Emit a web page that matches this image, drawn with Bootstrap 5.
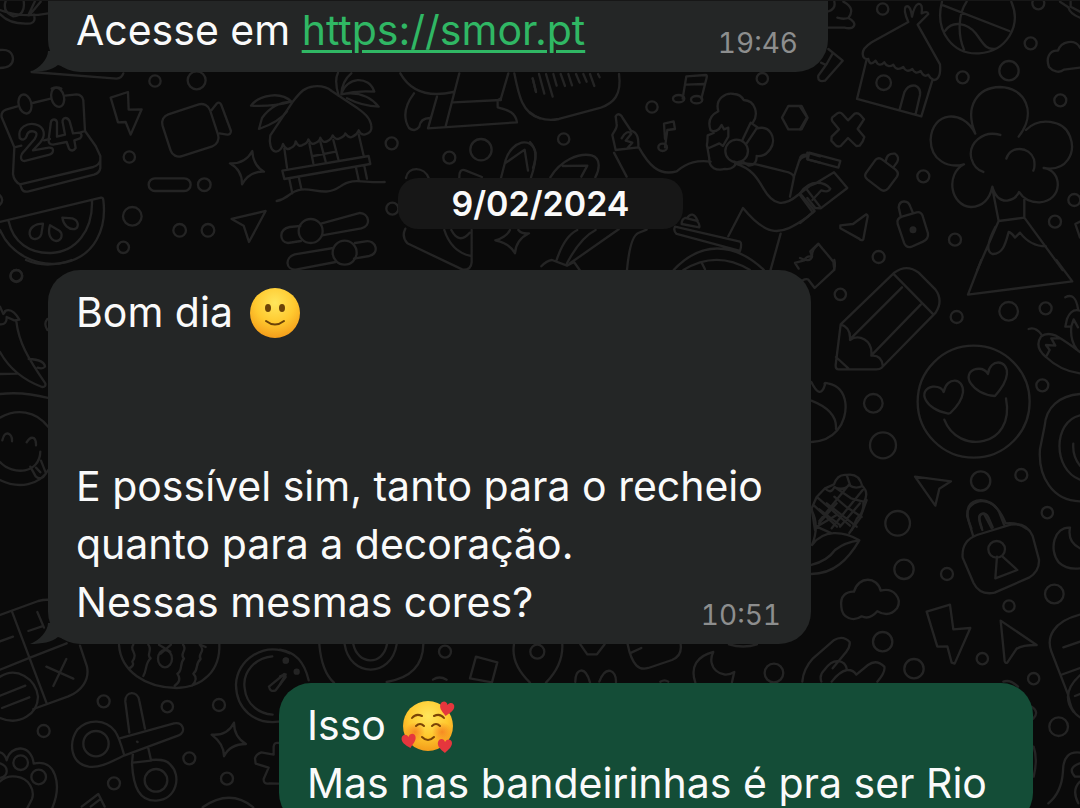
<!DOCTYPE html>
<html lang="pt">
<head>
<meta charset="utf-8">
<meta name="viewport" content="width=device-width, initial-scale=1">
<title>Conversa</title>
<link href="https://cdn.jsdelivr.net/npm/bootstrap@5.3.0/dist/css/bootstrap.min.css" rel="stylesheet">
<style>
  body { background: #0a0a0a; font-family: "Inter", "Liberation Sans", sans-serif; color: #fafafa; }
  .chat { height: 100vh; padding: 0 47px 0 48px; border-top: 1px solid #171717; }
  .wallpaper { z-index: 0; fill: none; stroke: #242424; stroke-width: 7; stroke-linecap: round; stroke-linejoin: round; }
  .wallpaper .solid { fill: #242424; }
  .thread { z-index: 1; }
  .bubble { background: #242626; border-radius: 32px; padding: 13px 28px; font-size: 41px; line-height: 58px; max-width: 100%; }
  .bubble-cut { width: 780px; padding-top: 0; border-top-left-radius: 0; border-top-right-radius: 0; }
  .bubble-in { width: 763px; }
  .bubble-out { width: 754px; margin-top: 39px; background: #144d37; }
  .bubble a { color: #30b764; text-decoration-thickness: 3px; text-underline-offset: 5px; }
  .stamp { position: absolute; right: 30px; bottom: 12px; font-size: 28px; line-height: 34px; color: #8d8e8e; font-variant-numeric: tabular-nums; }
  .tail { position: absolute; left: -18px; bottom: -1px; fill: #242626; }
  .day { background: #171717; border-radius: 20px; font-size: 34px; line-height: 51px; font-weight: 600; padding: 0 53px; margin: 106px 0 41px; }
  .emoji { width: 56px; height: 56px; margin-left: 3px; vertical-align: -14px; }
</style>
</head>
<body>
<main class="chat position-relative overflow-hidden">
  <svg class="wallpaper position-absolute top-0 start-0 w-100 h-100" viewBox="0 1 1080 807" preserveAspectRatio="xMinYMin slice" aria-hidden="true">
    <!-- calendar, bolt, camera, melon -->
    <g transform="translate(0 70) scale(.3333)">
      <path d="M95 6L350 26Q365 24 370 10"/>
      <circle cx="465" cy="33" r="17"/><circle cx="590" cy="31" r="27"/>
      <path d="M52 109L18 119Q2 125 5 142L43 232L39 312Q42 334 60 343L66 358Q71 367 86 364L282 314Q299 309 301 294V258L287 228L255 183L250 91Q247 74 230 73L196 77M98 99L152 86M60 343L280 291Q297 286 301 271M43 232L64 227M132 211L150 207M242 187L255 183"/>
      <ellipse cx="75" cy="102" rx="19" ry="29" transform="rotate(-14 75 102)"/><ellipse cx="173" cy="82" rx="19" ry="29" transform="rotate(-14 173 82)"/>
      <path d="M59 204C52 171 83 158 106 163C137 171 137 199 120 218L99 241L146 233Q160 232 159 242Q158 252 146 255L75 273Q62 274 63 260Q64 252 71 245L104 207Q117 188 100 184Q83 182 80 198Q73 216 59 204Z"/>
      <path d="M171 156Q168 147 159 149Q152 151 152 162L146 208Q144 224 159 224L200 216L207 236Q217 248 227 234L223 211L240 205Q250 195 239 188L219 190L209 154Q203 141 192 145Q185 150 189 162L195 194L171 200Z"/>
      <path d="M332 83L384 66L386 119L425 118L392 194L377 156L354 157Z"/>
      <rect x="496" y="115" width="150" height="132" rx="27" transform="rotate(-18 571 181)"/>
      <path d="M635 120L651 100Q659 94 664 105L693 183Q692 195 682 194L658 190"/>
      <circle cx="388" cy="261" r="17"/>
      <path d="M757 243Q759 286 792 305Q749 303 726 343Q727 301 690 280Q736 282 757 243Z"/>
      <rect x="446" y="325" width="126" height="38" rx="19"/><circle cx="613" cy="344" r="19"/>
      <path d="M0 456L303 383Q309 382 310 390C321 477 284 557 197 577C109 597 30 549 0 480M26 454C39 517 89 551 153 549C227 546 279 483 276 391"/>
      <path d="M129 461C103 461 87 475 89 493C94 515 119 509 124 492ZM150 466C143 488 149 511 169 513C187 511 189 491 178 482ZM187 443C190 464 205 480 225 477C239 470 235 450 217 445Z"/>
      <circle cx="397" cy="439" r="28"/><circle cx="370" cy="532" r="17"/><circle cx="539" cy="481" r="19"/><circle cx="624" cy="481" r="19"/>
      <path d="M797 423L695 447L731 467L747 516Z"/><circle cx="49" cy="618" r="18"/><path d="M0 376Q13 390 0 404"/>
    </g>
    <!-- beach hut, walking legs, sliders -->
    <g transform="translate(250 70) scale(.3333)">
      <path d="M129 94L61 196C57 217 61 243 78 245Q93 244 99 222Q109 244 122 234Q136 228 137 214Q145 233 158 225Q172 221 175 208Q184 227 196 219Q210 214 211 203Q218 220 231 214Q245 208 248 196Q258 212 269 205Q284 200 286 190Q298 207 308 200Q321 194 326 181Q333 197 346 193Q367 188 364 168C361 142 340 127 323 115L245 63Q225 46 192 49C162 52 151 67 129 94Z"/>
      <path d="M124 95C94 64 28 73 3 107Q64 111 124 95Q70 97 36 144L27 177Q90 154 111 124M266 77C257 48 256 24 264 8M274 73Q276 33 304 10M274 73C289 20 356 15 373 65Q320 61 274 73Q344 60 386 110Q338 109 291 85"/>
      <path d="M103 235L111 293M326 193L341 257M178 220L190 280M211 215L227 275M250 210L265 268M190 258L257 245M97 302L356 258L361 282L103 327ZM118 327L127 370M147 325L154 356M318 293L326 330M343 288L351 326M80 393C119 386 114 365 153 359C187 352 226 381 270 350C311 319 341 341 404 336"/>
      <circle cx="425" cy="220" r="18"/><circle cx="427" cy="416" r="18"/><circle cx="598" cy="263" r="18"/><circle cx="693" cy="239" r="32"/>
      <path d="M451 10C482 65 533 83 610 66M628 10L587 169M775 10L753 85L743 91V112C778 121 796 128 801 157L534 175L561 80M610 97L753 90M492 70Q449 127 477 174Q494 188 508 170Q511 145 540 144M793 10C806 76 817 130 870 145M848 25L858 65"/>
      <path d="M468 324C474 288 523 289 536 324M628 324Q627 294 646 301L696 321M753 324L767 270C785 213 846 196 857 249Q857 282 843 323M765 280L824 239L834 302"/>
      <path d="M151 468L119 471C87 477 86 515 114 519L153 513M213 461L330 429C356 430 366 467 334 475L216 496M250 534L134 553C104 563 106 599 137 599L257 576M315 519L347 514C379 509 390 551 358 558L312 566"/>
      <circle cx="182" cy="483" r="36"/><circle cx="284" cy="548" r="36"/>
      <path d="M466 476Q454 500 472 520L638 599Q663 601 665 577V480M583 480Q604 545 662 558M604 480Q628 525 659 488M780 480Q769 502 736 511Q779 520 795 550Q798 509 837 490Q814 492 805 480"/>
    </g>
    <!-- dancer with headphones, notes -->
    <g transform="translate(530 60) scale(.3333)">
      <path d="M8 55L18 96M27 42L43 101M48 42L68 110M70 42L80 77M92 42L105 78M115 42L126 76M138 42L149 68M160 42L170 65M180 42L193 78M204 42L209 52M267 42C276 106 250 130 210 144L87 177Q35 187 0 157"/>
      <circle cx="366" cy="141" r="17"/><circle cx="101" cy="237" r="17"/><circle cx="697" cy="56" r="17"/>
      <path d="M458 116L469 49L527 45Q532 45 530 53L514 116M469 74L522 72M405 262L412 210L435 207L431 184L402 191L405 237"/>
      <ellipse cx="446" cy="116" rx="17" ry="11"/><ellipse cx="500" cy="119" rx="17" ry="11"/><ellipse cx="398" cy="262" rx="13" ry="11"/>
      <path d="M257 270L247 225C251 214 263 205 260 192L257 169C265 156 275 167 278 174L303 212C323 218 326 234 325 262ZM275 235Q291 207 304 221L287 242L307 248L292 265M252 278L290 350M327 263C354 311 385 350 440 334C473 307 503 300 542 305"/>
      <path d="M542 211C530 178 547 163 565 154C554 115 588 97 612 102Q632 103 641 120C677 122 686 163 669 187M542 211Q553 218 567 207L575 195L582 208L595 203L595 230L579 258L568 250L537 264Q528 263 532 247L533 226L551 219M532 261L538 296C536 325 560 333 585 327C607 330 621 315 614 305M637 241L662 188L682 202L650 250M679 206C720 193 742 236 721 267Q704 292 680 288M680 288Q681 315 657 317L640 306"/><circle cx="620" cy="273" r="34"/>
      <path d="M616 311C665 325 682 354 700 385C730 437 761 441 804 405L839 378L870 365M625 309L679 313L764 334Q789 338 792 352L780 410M791 353L810 295Q813 283 829 284M832 278L870 289M832 278V298L870 308M810 405L848 457L827 475C753 526 714 535 639 444L595 529M752 521L722 629M830 388L870 440"/>
      <path d="M775 138L815 138L833 173L815 208L775 208L756 173Z"/>
      <path d="M0 246Q27 275 9 324M61 352C93 300 147 278 185 286C217 296 206 333 196 352M98 318L172 317L154 350"/>
      <path d="M80 600Q103 529 142 510M111 610Q151 533 197 510M120 610L266 508M34 619Q50 602 66 600L111 617L132 606L149 630M291 630Q300 530 325 519L350 509M435 500L630 545Q637 550 630 573L440 522Q429 513 435 500ZM455 492L508 502Q510 492 501 483L465 474Q455 478 455 492M471 474Q488 450 503 482M431 630C512 544 610 544 702 630M460 630Q560 569 660 630M515 608L525 628M866 553Q845 567 846 590Q830 586 823 601L795 609L806 626"/>
    </g>
    <!-- straw house, ball, tree, locks -->
    <g transform="translate(800 0) scale(.3333)">
      <path d="M103 5Q108 28 85 34M130 5C157 18 159 37 145 54C177 70 162 90 134 83H85M112 53Q130 59 145 54M85 147L128 182L75 242Q52 248 55 227L80 192L98 160M63 188L78 195"/>
      <circle cx="248" cy="27" r="17"/><circle cx="692" cy="130" r="18"/><circle cx="627" cy="212" r="29"/><circle cx="488" cy="232" r="18"/><circle cx="781" cy="301" r="18"/><circle cx="370" cy="529" r="18"/><circle cx="465" cy="719" r="18"/><circle cx="765" cy="665" r="18"/><circle cx="236" cy="771" r="18"/><circle cx="823" cy="600" r="18"/><circle cx="715" cy="10" r="18"/>
      <path d="M325 66Q309 30 317 20Q331 12 336 50Q343 17 354 12Q369 8 365 40Q383 32 385 42L353 74L420 193Q424 237 402 240Q390 236 385 224Q372 234 362 213Q346 225 337 207Q319 220 310 201Q289 215 280 194Q263 205 253 187Q237 203 227 182Q209 200 205 177Q189 179 188 161Q188 145 215 127L325 66M199 182L171 297L364 349L398 238M299 328L313 277Q324 253 346 257Q363 265 360 285L347 342"/><circle cx="251" cy="248" r="22"/>
      <path d="M426 5C402 97 462 165 537 160C619 155 666 78 634 5M430 16L628 93M500 5C474 42 473 105 492 149M436 92C457 61 501 68 527 100C550 130 557 151 588 146M780 5L805 22Q810 42 840 53M812 5V20L840 35"/>
      <path d="M840 203L792 209C778 221 758 214 747 201C737 174 748 150 774 152C783 124 825 115 840 143"/>
      <path d="M112 340Q121 335 127 342L144 361L164 341Q173 337 181 345L192 358L173 387L193 411Q190 425 179 437L169 438L144 414L122 438Q112 442 106 435L94 422L95 410L117 388L97 364Q92 353 102 348Z"/>
      <path d="M28 458L121 483L115 503L23 478ZM0 480Q5 470 20 468M50 548L102 517L142 564L62 625L47 624M0 669L44 633L0 580M0 580C33 533 75 547 91 566Q86 579 64 571L37 600M22 594L46 624"/>
      <path d="M227 479Q237 471 247 479L286 508Q298 518 291 530L265 565Q254 578 241 568L202 538Q191 529 198 519ZM257 486Q260 458 285 461Q300 472 291 487L280 502M121 676L159 672L199 643Q205 646 202 655L190 718Q184 724 177 716L121 685Z"/>
      <path d="M306 650L350 637Q363 634 368 648L384 700Q386 717 369 725L333 741Q318 744 312 728L293 672Q289 655 306 650M302 648L296 622C298 599 325 599 331 620L338 637"/><circle class="solid" cx="339" cy="689" r="7"/>
      <path d="M526 401C492 319 533 262 600 261C675 263 713 337 656 410M526 401C489 326 396 334 392 419C392 481 445 506 492 493C436 522 450 617 513 621Q565 618 577 560Q589 604 622 602Q650 596 657 576Q677 608 719 607C791 602 788 510 731 504C800 516 829 459 810 409C790 357 715 352 678 390M601 405C548 389 504 431 514 475Q523 508 550 516M619 476C631 436 688 438 702 478Q706 500 700 512M579 575L596 663L532 810M673 593V653L788 810M596 663L673 653M586 681Q549 752 577 762C611 764 618 724 626 696Q634 697 645 713L660 698Q691 739 738 739M840 665L826 672L840 713M0 320L21 352L0 388M0 774Q30 789 36 770L31 754L55 731L100 785L103 810"/>
    </g>
    <!-- pencil, heart eyes, corn -->
    <g transform="translate(800 260) scale(.3333)">
      <path d="M103 0Q108 21 100 32L44 84L24 58Q9 55 0 71"/>
      <circle cx="121" cy="103" r="17"/><circle cx="470" cy="171" r="18"/><circle cx="626" cy="154" r="28"/><circle cx="737" cy="145" r="18"/><circle cx="220" cy="430" r="28"/><circle cx="249" cy="556" r="39"/><circle cx="727" cy="376" r="18"/><circle cx="542" cy="663" r="29"/><circle cx="664" cy="645" r="18"/><circle cx="521" cy="425" r="168"/>
      <path d="M544 0L504 104L817 64L769 0M122 193L283 38Q320 11 356 38L406 88Q431 122 407 158L244 324Q240 328 229 328H116Q106 328 107 315ZM282 43L397 160M152 236L306 82M217 283L362 134M122 193Q153 202 150 240C176 222 219 239 214 287Q244 284 248 316M108 291L145 325"/>
      <path d="M445 461C376 450 349 390 398 380Q424 378 431 396C441 348 492 353 489 397Q485 427 451 459ZM585 408C516 403 479 340 529 327Q553 323 564 342C569 295 624 297 621 342Q618 372 585 408ZM433 479C473 586 647 564 618 415"/>
      <path d="M686 207Q706 199 724 223M738 291Q702 261 723 230Q740 216 768 227Q800 245 840 276M738 291Q782 333 840 340M738 291L749 270L738 255L766 257L754 235L777 235M796 112Q826 96 834 146M840 152Q814 144 801 177L796 200L814 199L821 178L834 202M814 201Q810 240 830 267"/>
      <path d="M840 402C778 407 738 442 734 498L720 568C714 650 758 723 840 724M840 466C758 485 758 629 840 659M820 551Q817 588 840 617M34 366Q61 421 75 374Q70 366 84 370C150 384 148 468 112 511Q84 544 35 546M34 422Q112 452 108 507"/>
      <path d="M345 650L453 664L418 686L406 737ZM514 805Q485 734 530 722Q585 712 617 790M545 805Q528 763 552 761L575 805M617 790Q655 786 679 806"/>
      <path d="M45 810L35 745L50 711L75 685L102 673Q113 641 140 645Q176 638 187 678Q209 699 190 730Q192 757 171 775L155 810M75 685Q92 704 103 682Q132 693 147 675Q166 689 187 678M103 710L138 740L185 771M50 711L97 751L150 797M40 735L111 800M146 675L58 783M188 690L95 805M140 645L150 675M105 682L153 715L190 725"/><circle cx="293" cy="790" r="37"/><circle cx="742" cy="758" r="17"/>
    </g>
    <!-- padlock, cloud, bolt, pointer -->
    <g transform="translate(800 500) scale(.3333)">
      <path d="M50 80L110 45M58 28L122 77M80 10L170 80M50 80L95 100M180 10L120 80M200 0L180 55L148 99M57 70L110 10M34 30Q60 75 36 135C70 88 129 92 178 121C144 178 102 222 34 222M34 195Q83 182 105 150Q135 126 178 121"/>
      <circle cx="312" cy="208" r="29"/><circle cx="441" cy="222" r="18"/><circle cx="627" cy="318" r="17"/><circle cx="763" cy="282" r="28"/><circle cx="248" cy="425" r="29"/><circle cx="342" cy="506" r="29"/><circle cx="547" cy="476" r="17"/><circle cx="701" cy="536" r="17"/><circle cx="776" cy="680" r="28"/><circle cx="590" cy="148" r="25"/>
      <path d="M531 105L632 74Q680 66 698 108L717 179Q719 214 687 233L584 278Q540 287 521 250L488 173Q484 122 531 105M519 106L502 50C496 0 570 -17 597 35L612 74M547 90L539 62C532 38 557 32 565 52L578 82M591 170L586 235L652 210L607 169"/>
      <path d="M162 275C175 227 232 229 242 272C281 261 308 296 291 325Q267 354 232 334Q208 361 185 349C160 366 126 355 124 321C119 287 140 274 162 275Z"/>
      <path d="M380 335L450 314L460 388L511 384L464 491L455 488L442 439L412 440ZM602 362L710 435Q667 435 650 446L622 488Q616 491 614 483Z"/>
      <path d="M810 83C764 79 744 148 777 188Q801 210 840 205M810 83Q802 126 840 145M840 344C758 365 739 413 754 454L804 583C811 620 818 638 840 652M790 442L840 425M782 525L840 504M840 526Q780 580 820 635M825 588L840 582"/>
      <path d="M7 545Q10 507 39 475L101 421Q129 404 149 426Q151 440 139 455L98 505M64 545Q57 525 73 510C101 470 136 479 141 510Q160 509 169 524L204 495Q229 476 253 500Q257 516 232 545M95 545Q119 514 141 510M610 545Q630 537 654 560M695 620Q719 636 700 656M701 740Q714 778 701 830M745 910Q785 878 789 814C789 771 808 754 840 758M840 790Q800 804 825 830H840M840 845Q814 869 835 910"/>
    </g>
    <!-- keypad, scissors, globe, stopwatch, paw -->
    <g transform="translate(0 580) scale(.3333)">
      <path d="M0 105L115 63Q142 56 160 62M36 95L140 370M0 269L92 232L200 190M0 184L39 170M85 153L126 139M112 96L132 143M100 387L203 350C246 333 269 298 261 260L240 197M139 260L220 296M199 237L160 318"/>
      <path d="M0 290C50 259 107 295 114 350C113 401 60 439 0 414M0 347L76 317M6 384L88 352"/>
      <path d="M357 194C362 274 437 323 530 324C609 322 662 271 658 190M400 194C386 211 417 218 397 245Q405 258 385 266M445 194C459 211 437 225 452 235C434 250 443 266 430 288M549 194C565 211 536 220 552 236C537 251 550 271 532 281Q547 302 524 317M599 194C620 213 590 223 602 237C584 252 597 269 580 281Q596 297 576 317M477 194L511 215M513 194L482 221M600 194L617 201"/><ellipse cx="495" cy="236" rx="21" ry="26"/>
      <path d="M870 220C790 184 710 240 708 314C709 388 765 434 836 425M817 229C765 234 727 276 734 324C739 376 779 401 818 404M807 320L853 282L857 291L827 331Q810 337 807 320"/><circle class="solid" cx="857" cy="242" r="6"/>
      <circle cx="311" cy="364" r="18"/><circle cx="502" cy="380" r="17"/><circle cx="657" cy="375" r="18"/><circle cx="131" cy="453" r="18"/><circle cx="568" cy="535" r="18"/><circle cx="342" cy="610" r="18"/><circle cx="681" cy="596" r="18"/>
      <path d="M388 458L376 365C375 332 413 331 418 362L435 446M399 518L396 550C400 623 419 664 469 662C530 659 546 587 511 554Q498 536 453 540L445 505M399 548L453 542M359 475L522 430C549 425 560 455 536 466L374 526C332 546 299 565 266 560C211 550 205 489 232 449C266 413 318 420 344 452Q357 470 372 523M411 485L413 486"/><circle cx="288" cy="491" r="38"/><circle cx="468" cy="601" r="34"/>
      <path d="M702 428Q702 470 738 492Q690 492 672 529Q673 493 635 464Q682 468 702 428M835 489Q823 486 821 500V524L784 517Q769 522 765 535L767 551L806 563L791 597Q790 614 808 610L835 611"/>
      <path d="M0 517Q15 521 20 541C31 493 95 491 101 551C168 535 186 614 157 684M0 550Q21 558 20 573Q21 588 0 594M0 604Q20 585 50 590C87 595 105 630 96 657L82 684M245 680L295 642L314 680M272 680L300 658M608 682Q690 625 760 682"/><circle cx="62" cy="548" r="22"/><circle cx="116" cy="591" r="22"/>
    </g>
    <!-- strip between the two lower messages -->
    <g transform="translate(280 630) scale(.3333)">
      <path d="M118 43Q125 125 162 158M430 43C429 98 399 143 320 156M194 43C209 142 333 146 350 43M220 43C233 105 308 109 321 43M0 59Q67 68 86 151M0 163L17 133L0 139M459 149Q478 136 500 149M588 80L652 97L636 157L570 145ZM702 43Q692 102 750 158M847 43Q850 105 798 158M901 43L922 73H951L974 43M886 156C885 115 916 105 930 157M958 155C977 104 1010 119 1008 157M1043 43Q1052 88 1069 106Q1082 120 1105 114L1176 90Q1207 78 1202 43M1054 68L1084 54M1246 157C1230 111 1251 78 1300 66C1277 111 1325 151 1363 126L1356 157M1347 43Q1390 56 1431 43M1141 155Q1154 147 1165 155"/>
      <circle cx="495" cy="65" r="18"/><circle cx="772" cy="65" r="21"/><circle cx="1482" cy="129" r="28"/><circle class="solid" cx="18" cy="91" r="6"/><circle class="solid" cx="50" cy="125" r="6"/>
    </g>
    <!-- chilli and winking face -->
    <g transform="translate(0 260) scale(.3333)">
      <circle cx="49" cy="47" r="17"/>
      <path d="M0 140L10 162L17 153M0 193Q21 195 20 171L43 181L58 179Q37 142 15 153M49 184C56 246 83 293 136 370Q138 382 126 381C73 361 28 327 0 276M86 297Q133 299 135 320Q129 328 113 323M0 342L53 341M0 402Q70 394 144 414M144 500C107 451 49 445 0 473M0 660C58 689 119 674 145 630M7 541Q12 518 25 521Q37 526 36 544M80 547Q90 530 101 534Q109 541 108 556M0 606C39 648 119 641 121 575M91 620L107 649Q124 664 138 640L123 602M108 623L121 637M142 177Q130 191 142 210M78 0Q140 27 215 0"/>
    </g>
    <g transform="scale(.3333)">
      <path d="M0 30Q64 55 145 40M0 42Q30 75 92 70Q108 67 102 44M17 3Q6 35 40 49Q77 46 71 3M85 46L105 3M122 5L88 46M0 150Q36 146 39 176Q39 202 0 204M155 266Q170 259 184 266"/>
    </g>
  </svg>

  <div class="thread position-relative d-flex flex-column align-items-start">
    <article class="bubble bubble-cut position-relative">
      <svg class="tail" width="34" height="22" aria-hidden="true"><path d="M18 0C18 8 10 17 0 21C12 21 22 19 28 14L34 16V0Z"/></svg>
      <div>Acesse em <a href="https://smor.pt">https://smor.pt</a></div>
      <time class="stamp">19:46</time>
    </article>

    <time class="day align-self-center" datetime="2024-02-09">9/02/2024</time>

    <article class="bubble bubble-in position-relative">
      <svg class="tail" width="34" height="22" aria-hidden="true"><path d="M18 0C18 8 10 17 0 21C12 21 22 19 28 14L34 16V0Z"/></svg>
      <div>Bom dia
        <svg class="emoji" viewBox="0 0 56 56" role="img" aria-label="sorriso">
          <defs>
            <radialGradient id="skin" cx=".5" cy=".3" r=".72"><stop offset="0" stop-color="#ffe65c"/><stop offset=".55" stop-color="#ffc92f"/><stop offset="1" stop-color="#f39a19"/></radialGradient>
          </defs>
          <circle cx="28" cy="28" r="25" fill="url(#skin)"/>
          <ellipse cx="21" cy="23" rx="3" ry="4" fill="#6b4208"/><ellipse cx="35" cy="23" rx="3" ry="4" fill="#6b4208"/>
          <path d="M19 36Q28 43 37 36" fill="none" stroke="#6b4208" stroke-width="2" stroke-linecap="round"/>
        </svg>
      </div>
      <br><br>
      <div>E possível sim, tanto para o recheio<br>quanto para a decoração.<br>Nessas mesmas cores?</div>
      <time class="stamp">10:51</time>
    </article>

    <article class="bubble bubble-out position-relative align-self-end">
      <div>Isso
        <svg class="emoji" viewBox="0 0 56 56" role="img" aria-label="sorriso com corações">
          <defs>
            <radialGradient id="blush"><stop offset="0" stop-color="#f47b20" stop-opacity=".8"/><stop offset="1" stop-color="#f47b20" stop-opacity="0"/></radialGradient>
            <path id="heart" d="M0 8C-5 4-8 1-7-3C-6-7-1-7 0-3C2-7 7-6 7-2C7 2 3 5 0 8Z"/>
          </defs>
          <circle cx="28" cy="28" r="25" fill="url(#skin)"/>
          <circle cx="15" cy="34" r="10" fill="url(#blush)"/><circle cx="42" cy="34" r="10" fill="url(#blush)"/>
          <path d="M12 20Q16 15 22 18M34 18Q40 15 44 20M16 28Q20 24 24 28M32 28Q36 24 40 28M22 39Q28 45 34 39" fill="none" stroke="#7a4306" stroke-width="2" stroke-linecap="round"/>
          <g fill="#e5363d"><use href="#heart" transform="translate(47 10) rotate(10)"/><use href="#heart" transform="translate(9 42) rotate(-10)"/><use href="#heart" transform="translate(45 47)"/></g>
        </svg>
      </div>
      <div>Mas nas bandeirinhas é pra ser Rio</div>
    </article>
  </div>
</main>
<script src="https://cdn.jsdelivr.net/npm/bootstrap@5.3.0/dist/js/bootstrap.bundle.min.js"></script>
</body>
</html>
